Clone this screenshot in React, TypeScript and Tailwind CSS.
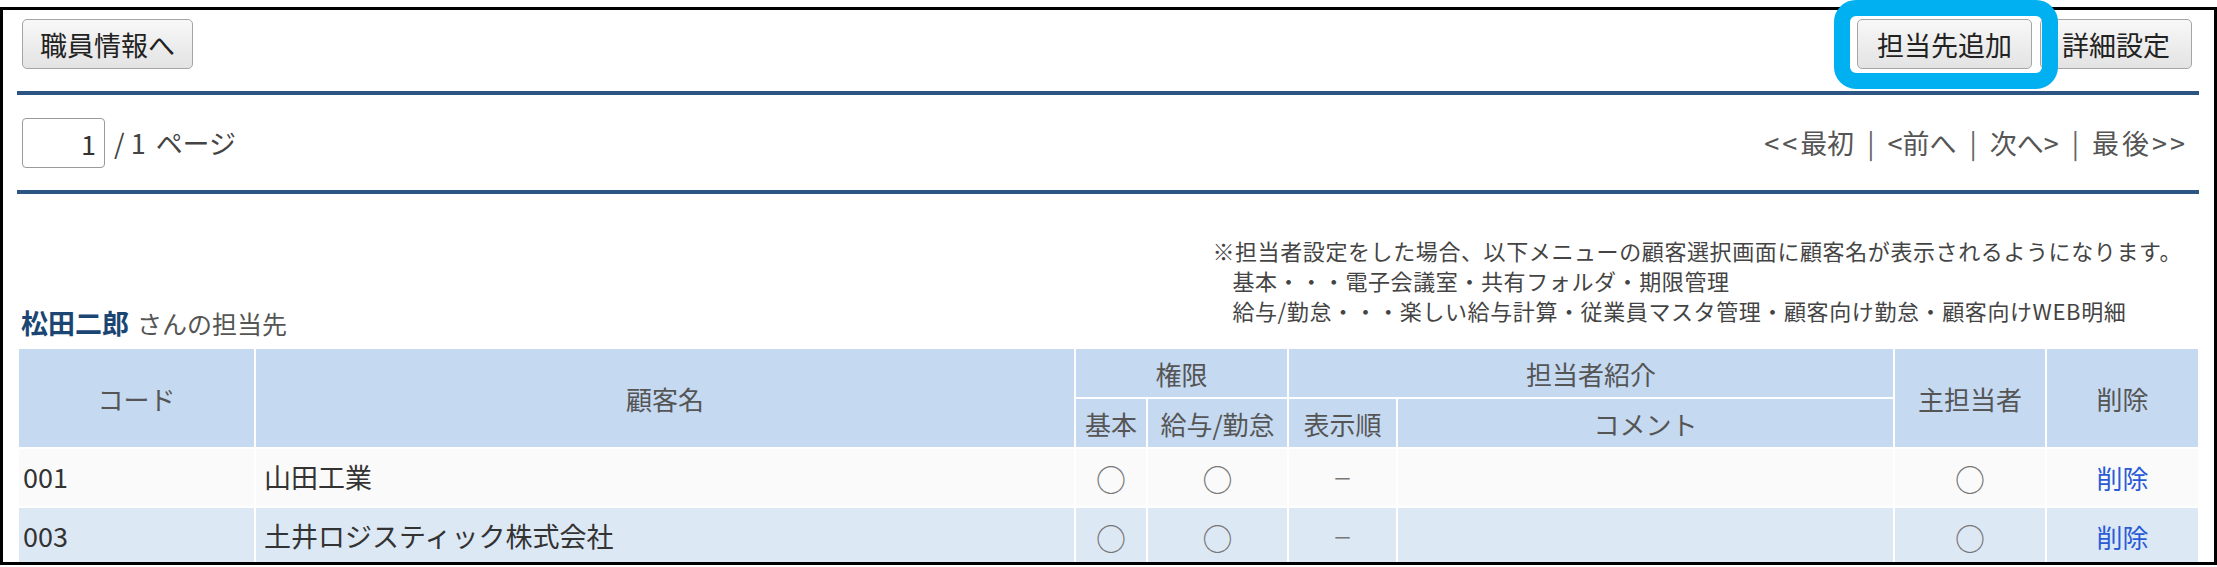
import React, { FC, ReactNode } from 'react'

interface BtnProps {
  children: ReactNode;
  className?: string;
}

const Btn: FC<BtnProps> = ({ children, className }) => (
  <button
    type="button"
    className={`h-[50px] rounded-[5px] border-[1.5px] border-[#a5a5a5] bg-linear-to-b from-[#f8f8f8] to-[#e3e3e3] text-[27px] leading-none text-[#222] ${className ?? ''}`}
  >
    {children}
  </button>
)

const rows = [
  { code: '001', name: '山田工業', bg: 'bg-[#fafafa]' },
  { code: '003', name: '土井ロジスティック株式会社', bg: 'bg-[#dde8f5]' },
]

const Sep = () => <span className="mx-[13px] text-[#666]">|</span>

export default function App() {
  return (
    <div className="relative w-[2217px] h-[567px] bg-white font-['Noto_Sans_CJK_JP','Noto_Sans',sans-serif]">
      <div className="pt-[7px]">
        <div className="h-[558px] overflow-hidden border-[3px] border-black pl-[14px] pr-[15px] pt-[9px]">
          {/* top buttons */}
          <div className="flex items-center justify-between pl-[5px] pr-[7px]">
            <Btn className="w-[171px]">職員情報へ</Btn>
            <div className="flex gap-[8px]">
              <Btn className="w-[175px]">担当先追加</Btn>
              <Btn className="w-[152px]">詳細設定</Btn>
            </div>
          </div>

          <div className="mt-[22px] h-[4px] bg-[#2d5584]" />

          {/* paging */}
          <div className="mt-[23px] flex h-[50px] items-center justify-between pl-[5px] pr-[11px] text-[27px] text-[#444]">
            <div className="flex items-center gap-[9px]">
              <input
                readOnly
                defaultValue="1"
                className="h-[50px] w-[83px] rounded-[4px] border-[1.5px] border-[#9a9a9a] pr-[8px] text-right text-[27px] text-[#333] outline-none"
              />
              <span>/ 1<span className="ml-[10px]">ページ</span></span>
            </div>
            <div className="flex items-center text-[#555]">
              <span className="tracking-[3px]">&lt;&lt;</span>最初
              <Sep />
              <span>&lt;前へ</span>
              <Sep />
              <span>次へ&gt;</span>
              <Sep />
              <span className="tracking-[3px]">最後&gt;&gt;</span>
            </div>
          </div>

          <div className="mt-[22px] h-[4px] bg-[#2d5584]" />

          {/* title + note */}
          <div className="mt-[41px] flex items-end justify-between">
            <div className="pl-[4px] text-[27px] leading-[30px]">
              <span className="font-bold text-[#1b4674]">松田二郎</span>
              <span className="ml-[8px] text-[25px] text-[#555]">さんの担当先</span>
            </div>
            <div className="mb-[13px] mr-[17px] text-[22px] leading-[30px] tracking-[0.6px] text-[#444]">
              <div>※担当者設定をした場合、以下メニューの顧客選択画面に顧客名が表示されるようになります。</div>
              <div className="pl-[20px]">基本・・・電子会議室・共有フォルダ・期限管理</div>
              <div className="pl-[20px]">給与/勤怠・・・楽しい給与計算・従業員マスタ管理・顧客向け勤怠・顧客向けWEB明細</div>
            </div>
          </div>

          {/* table */}
          <table className="mt-[9px] w-[2182px] table-fixed border-collapse text-[26px]">
            <colgroup>
              <col className="w-[237px]" />
              <col className="w-[820px]" />
              <col className="w-[72px]" />
              <col className="w-[141px]" />
              <col className="w-[109px]" />
              <col className="w-[497px]" />
              <col className="w-[152px]" />
              <col className="w-[153px]" />
            </colgroup>
            <thead className="bg-[#c5d9f1] text-[#555]">
              <tr className="h-[50px]">
                <th rowSpan={2} className="border-2 border-white font-normal">コード</th>
                <th rowSpan={2} className="border-2 border-white font-normal">顧客名</th>
                <th colSpan={2} className="border-2 border-white font-normal">権限</th>
                <th colSpan={2} className="border-2 border-white font-normal">担当者紹介</th>
                <th rowSpan={2} className="border-2 border-white font-normal">主担当者</th>
                <th rowSpan={2} className="border-2 border-white font-normal">削除</th>
              </tr>
              <tr className="h-[50px]">
                <th className="border-2 border-white px-0 font-normal whitespace-nowrap">基本</th>
                <th className="border-2 border-white px-0 font-normal whitespace-nowrap">給与/勤怠</th>
                <th className="border-2 border-white px-0 font-normal whitespace-nowrap">表示順</th>
                <th className="border-2 border-white font-normal">コメント</th>
              </tr>
            </thead>
            <tbody className="text-[#333]">
              {rows.map((r) => (
                <tr key={r.code} className={`h-[59px] ${r.bg}`}>
                  <td className="border-2 border-white pl-[4px] text-[27px]">{r.code}</td>
                  <td className="border-2 border-white pl-[8px] text-[27px]">{r.name}</td>
                  <td className="border-2 border-white text-center text-[30px] leading-none text-[#777]">○</td>
                  <td className="border-2 border-white text-center text-[30px] leading-none text-[#777]">○</td>
                  <td className="border-2 border-white text-center text-[18px] leading-none text-[#777]">ー</td>
                  <td className="border-2 border-white"></td>
                  <td className="border-2 border-white text-center text-[30px] leading-none text-[#777]">○</td>
                  <td className="border-2 border-white text-center text-[#2a5bd6]">削除</td>
                </tr>
              ))}
            </tbody>
          </table>
        </div>
      </div>

      {/* highlight frame */}
      <div className="pointer-events-none absolute left-[1834px] top-0 h-[89px] w-[224px] rounded-[22px] border-[16px] border-[#00b0f0]" />
    </div>
  )
}
